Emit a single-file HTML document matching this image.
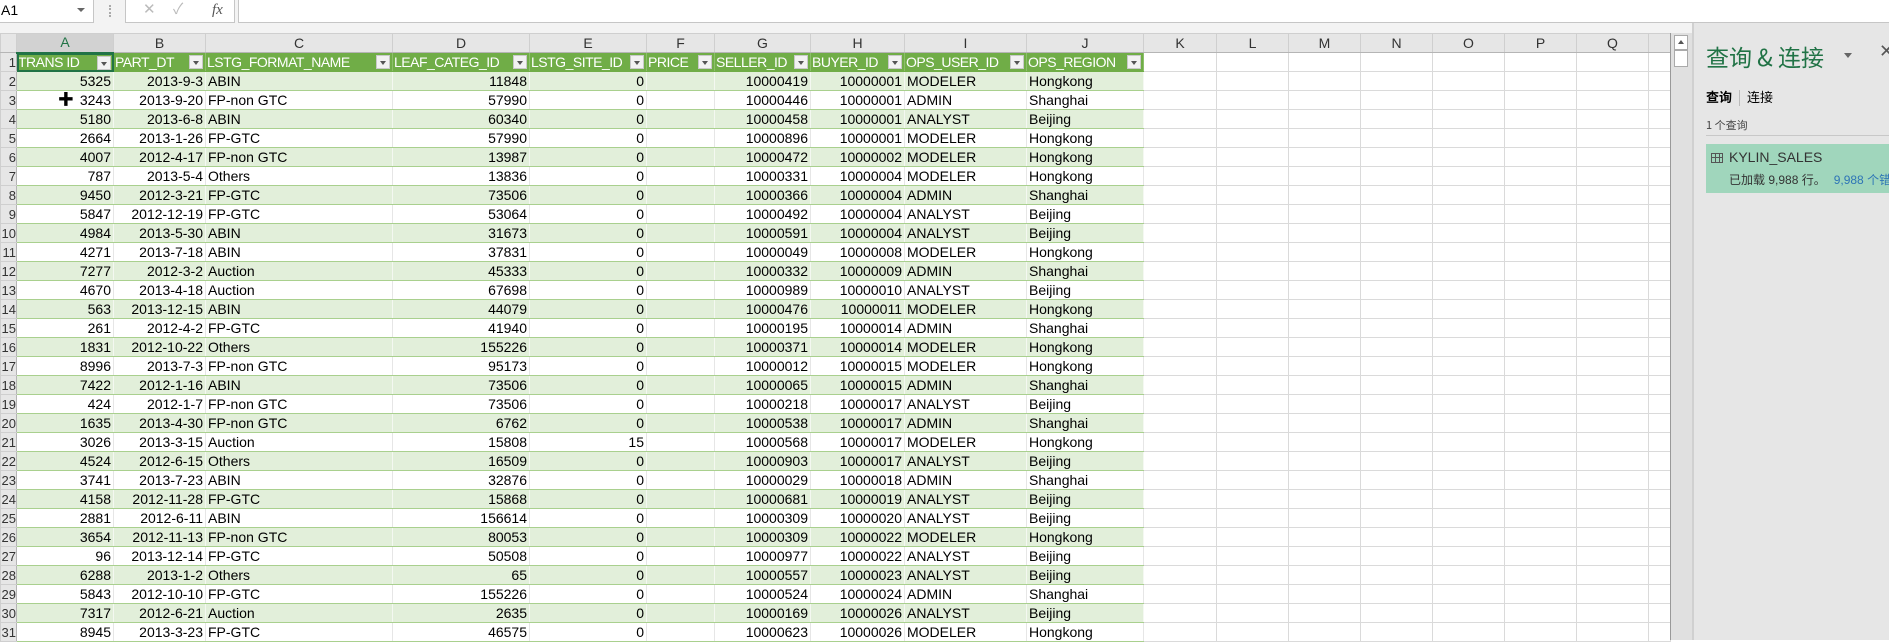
<!DOCTYPE html>
<html><head><meta charset="utf-8">
<style>
*{margin:0;padding:0;box-sizing:border-box}
body{width:1889px;height:640px;overflow:hidden;background:#fff;font-family:"Liberation Sans","Noto Sans CJK SC",sans-serif;font-size:14px;color:#000;position:relative}
.top{position:absolute;left:0;top:0;width:1889px;height:33px;background:#f3f3f3}
.nb{position:absolute;left:0;top:0;width:94px;height:23px;background:#fff;border:1px solid #c6c6c6;border-left:none;border-top:none;font-size:14px;line-height:21px;padding-left:1px}
.nb .ar{position:absolute;right:8px;top:8px;width:0;height:0;border-left:4px solid transparent;border-right:4px solid transparent;border-top:4px solid #666}
.dots{position:absolute;left:109px;top:5px;width:2px;height:12px;border-left:2px dotted #aaa}
.fx{position:absolute;left:125px;top:0;width:110px;height:23px;background:#fff;border:1px solid #c6c6c6;border-top:none;color:#bbb;font-size:15px;line-height:20px}
.fin{position:absolute;left:238px;top:0;width:1651px;height:23px;background:#fff;border:1px solid #c6c6c6;border-top:none;border-right:none}
table{position:absolute;left:0;top:33px;border-collapse:collapse;table-layout:fixed}
td{height:19px;padding:0 2px;border:1px solid #dadada;white-space:nowrap;overflow:hidden;line-height:17px;font-size:14px}
tr.ch td{background:#e6e6e6;text-align:center;color:#333;border-color:#cfcfcf;border-bottom:1px solid #b5b5b5}
td.rh{background:#e6e6e6;color:#333;text-align:right;padding:0;border-color:#cfcfcf;border-right:1px solid #b5b5b5;font-size:13px;direction:rtl}
tr.h td.t{background:#70ad47;color:#fff;position:relative;padding-right:16px;padding-left:1px;border-color:#70ad47;border-right-color:#8cc06a;letter-spacing:-0.5px}
tr.h td.t i{position:absolute;right:2px;top:2px;width:14px;height:14px;background:#f2f2f2;border:1px solid #c9c9c9}
tr.h td.t i:after{content:"";position:absolute;left:3px;top:5px;border-left:3.5px solid transparent;border-right:3.5px solid transparent;border-top:4px solid #555}
tr.g td.t{background:#e2efda}
tr td.t{border-color:#a9d08e;border-left-color:#fff;border-right-color:#e6e6e6}
tr.g td.t{border-left-color:#f4f8f1;border-right-color:#f4f8f1}
.r{text-align:right}
.sb{position:absolute;left:1670px;top:33px;width:22px;height:607px;background:#e0e0e0;border-left:1px solid #999}
.sb .up{position:absolute;left:3px;top:2px;width:14px;height:15px;background:#fff;border:1px solid #aaa}
.sb .up:after{content:"";position:absolute;left:3px;top:4px;border-left:3.5px solid transparent;border-right:3.5px solid transparent;border-bottom:4px solid #555}
.sb .th{position:absolute;left:3px;top:17px;width:14px;height:17px;background:#fff;border:1px solid #aaa}
.pn{position:absolute;left:1692px;top:23px;width:197px;height:617px;background:#e6e6e6;border-left:2px solid #d0d0d0}
.ttl{position:absolute;left:12px;top:16px;font-size:23px;color:#217346;white-space:nowrap;font-family:"Noto Sans CJK SC","Liberation Sans",sans-serif}
.pdd{position:absolute;left:150px;top:30px;border-left:4px solid transparent;border-right:4px solid transparent;border-top:5px solid #666}
.px{position:absolute;left:185px;top:18px;font-size:18px;color:#555}
.tabs{position:absolute;left:12px;top:64px;font-size:13px;white-space:nowrap;font-family:"Noto Sans CJK SC",sans-serif}
.tabs b{font-weight:bold}
.tabs span{display:inline-block;border-left:1px solid #bbb;height:16px;vertical-align:middle;margin:0 7px}
.cnt{position:absolute;left:12px;top:94px;font-size:11px;color:#444;white-space:nowrap;font-family:"Noto Sans CJK SC",sans-serif}
.ln{position:absolute;left:12px;top:112px;width:185px;height:1px;background:#c8c8c8}
.it{position:absolute;left:12px;top:121px;width:185px;height:49px;background:#a0d6bc}
.it .ic{position:absolute;left:5px;top:9px;width:12px;height:10px;border:1px solid #555;background:linear-gradient(#555,#555) 0 3px/100% 1px no-repeat,linear-gradient(90deg,transparent 3px,#555 3px,#555 4px,transparent 4px,transparent 7px,#555 7px,#555 8px,transparent 8px)}
.it .n{position:absolute;left:23px;top:5px;font-size:14px;color:#333;white-space:nowrap}
.it .s{position:absolute;left:23px;top:27px;font-size:12px;color:#333;white-space:nowrap;font-family:"Liberation Sans","Noto Sans CJK SC",sans-serif}
.it .s em{font-style:normal;color:#2e75b6;margin-left:8px}
</style></head><body>
<div class="top">
<div class="nb">A1<span class="ar"></span></div>
<div class="dots"></div>
<div class="fx"><span style="position:absolute;left:17px">✕</span><span style="position:absolute;left:47px">✓</span><span style="position:absolute;left:86px;color:#555;font-style:italic;font-family:'Liberation Serif',serif">fx</span></div>
<div class="fin"></div>
</div>
<table>
<colgroup><col style="width:16px"><col style="width:97px"><col style="width:92px"><col style="width:187px"><col style="width:137px"><col style="width:117px"><col style="width:68px"><col style="width:96px"><col style="width:94px"><col style="width:122px"><col style="width:117px"><col style="width:73px"><col style="width:72px"><col style="width:72px"><col style="width:72px"><col style="width:72px"><col style="width:72px"><col style="width:72px"><col style="width:22px"></colgroup>
<tr class="ch"><td style="background:#e6e6e6"></td><td style="background:#d2d2d2;color:#217346;border-bottom:2px solid #217346">A</td><td>B</td><td>C</td><td>D</td><td>E</td><td>F</td><td>G</td><td>H</td><td>I</td><td>J</td><td>K</td><td>L</td><td>M</td><td>N</td><td>O</td><td>P</td><td>Q</td><td></td></tr>
<tr class="h"><td class="rh">1</td><td class="t" style="outline:2px solid #217346;outline-offset:-2px">TRANS ID<i></i></td><td class="t">PART_DT<i></i></td><td class="t">LSTG_FORMAT_NAME<i></i></td><td class="t">LEAF_CATEG_ID<i></i></td><td class="t">LSTG_SITE_ID<i></i></td><td class="t">PRICE<i></i></td><td class="t">SELLER_ID<i></i></td><td class="t">BUYER_ID<i></i></td><td class="t">OPS_USER_ID<i></i></td><td class="t">OPS_REGION<i></i></td><td></td><td></td><td></td><td></td><td></td><td></td><td></td><td></td></tr>
<tr class="g"><td class="rh">2</td><td class="t r">5325</td><td class="t r">2013-9-3</td><td class="t">ABIN</td><td class="t r">11848</td><td class="t r">0</td><td class="t"></td><td class="t r">10000419</td><td class="t r">10000001</td><td class="t">MODELER</td><td class="t">Hongkong</td><td></td><td></td><td></td><td></td><td></td><td></td><td></td><td></td></tr>
<tr><td class="rh">3</td><td class="t r"><b style="font-size:16px;margin-right:6px">✚</b>3243</td><td class="t r">2013-9-20</td><td class="t">FP-non GTC</td><td class="t r">57990</td><td class="t r">0</td><td class="t"></td><td class="t r">10000446</td><td class="t r">10000001</td><td class="t">ADMIN</td><td class="t">Shanghai</td><td></td><td></td><td></td><td></td><td></td><td></td><td></td><td></td></tr>
<tr class="g"><td class="rh">4</td><td class="t r">5180</td><td class="t r">2013-6-8</td><td class="t">ABIN</td><td class="t r">60340</td><td class="t r">0</td><td class="t"></td><td class="t r">10000458</td><td class="t r">10000001</td><td class="t">ANALYST</td><td class="t">Beijing</td><td></td><td></td><td></td><td></td><td></td><td></td><td></td><td></td></tr>
<tr><td class="rh">5</td><td class="t r">2664</td><td class="t r">2013-1-26</td><td class="t">FP-GTC</td><td class="t r">57990</td><td class="t r">0</td><td class="t"></td><td class="t r">10000896</td><td class="t r">10000001</td><td class="t">MODELER</td><td class="t">Hongkong</td><td></td><td></td><td></td><td></td><td></td><td></td><td></td><td></td></tr>
<tr class="g"><td class="rh">6</td><td class="t r">4007</td><td class="t r">2012-4-17</td><td class="t">FP-non GTC</td><td class="t r">13987</td><td class="t r">0</td><td class="t"></td><td class="t r">10000472</td><td class="t r">10000002</td><td class="t">MODELER</td><td class="t">Hongkong</td><td></td><td></td><td></td><td></td><td></td><td></td><td></td><td></td></tr>
<tr><td class="rh">7</td><td class="t r">787</td><td class="t r">2013-5-4</td><td class="t">Others</td><td class="t r">13836</td><td class="t r">0</td><td class="t"></td><td class="t r">10000331</td><td class="t r">10000004</td><td class="t">MODELER</td><td class="t">Hongkong</td><td></td><td></td><td></td><td></td><td></td><td></td><td></td><td></td></tr>
<tr class="g"><td class="rh">8</td><td class="t r">9450</td><td class="t r">2012-3-21</td><td class="t">FP-GTC</td><td class="t r">73506</td><td class="t r">0</td><td class="t"></td><td class="t r">10000366</td><td class="t r">10000004</td><td class="t">ADMIN</td><td class="t">Shanghai</td><td></td><td></td><td></td><td></td><td></td><td></td><td></td><td></td></tr>
<tr><td class="rh">9</td><td class="t r">5847</td><td class="t r">2012-12-19</td><td class="t">FP-GTC</td><td class="t r">53064</td><td class="t r">0</td><td class="t"></td><td class="t r">10000492</td><td class="t r">10000004</td><td class="t">ANALYST</td><td class="t">Beijing</td><td></td><td></td><td></td><td></td><td></td><td></td><td></td><td></td></tr>
<tr class="g"><td class="rh">10</td><td class="t r">4984</td><td class="t r">2013-5-30</td><td class="t">ABIN</td><td class="t r">31673</td><td class="t r">0</td><td class="t"></td><td class="t r">10000591</td><td class="t r">10000004</td><td class="t">ANALYST</td><td class="t">Beijing</td><td></td><td></td><td></td><td></td><td></td><td></td><td></td><td></td></tr>
<tr><td class="rh">11</td><td class="t r">4271</td><td class="t r">2013-7-18</td><td class="t">ABIN</td><td class="t r">37831</td><td class="t r">0</td><td class="t"></td><td class="t r">10000049</td><td class="t r">10000008</td><td class="t">MODELER</td><td class="t">Hongkong</td><td></td><td></td><td></td><td></td><td></td><td></td><td></td><td></td></tr>
<tr class="g"><td class="rh">12</td><td class="t r">7277</td><td class="t r">2012-3-2</td><td class="t">Auction</td><td class="t r">45333</td><td class="t r">0</td><td class="t"></td><td class="t r">10000332</td><td class="t r">10000009</td><td class="t">ADMIN</td><td class="t">Shanghai</td><td></td><td></td><td></td><td></td><td></td><td></td><td></td><td></td></tr>
<tr><td class="rh">13</td><td class="t r">4670</td><td class="t r">2013-4-18</td><td class="t">Auction</td><td class="t r">67698</td><td class="t r">0</td><td class="t"></td><td class="t r">10000989</td><td class="t r">10000010</td><td class="t">ANALYST</td><td class="t">Beijing</td><td></td><td></td><td></td><td></td><td></td><td></td><td></td><td></td></tr>
<tr class="g"><td class="rh">14</td><td class="t r">563</td><td class="t r">2013-12-15</td><td class="t">ABIN</td><td class="t r">44079</td><td class="t r">0</td><td class="t"></td><td class="t r">10000476</td><td class="t r">10000011</td><td class="t">MODELER</td><td class="t">Hongkong</td><td></td><td></td><td></td><td></td><td></td><td></td><td></td><td></td></tr>
<tr><td class="rh">15</td><td class="t r">261</td><td class="t r">2012-4-2</td><td class="t">FP-GTC</td><td class="t r">41940</td><td class="t r">0</td><td class="t"></td><td class="t r">10000195</td><td class="t r">10000014</td><td class="t">ADMIN</td><td class="t">Shanghai</td><td></td><td></td><td></td><td></td><td></td><td></td><td></td><td></td></tr>
<tr class="g"><td class="rh">16</td><td class="t r">1831</td><td class="t r">2012-10-22</td><td class="t">Others</td><td class="t r">155226</td><td class="t r">0</td><td class="t"></td><td class="t r">10000371</td><td class="t r">10000014</td><td class="t">MODELER</td><td class="t">Hongkong</td><td></td><td></td><td></td><td></td><td></td><td></td><td></td><td></td></tr>
<tr><td class="rh">17</td><td class="t r">8996</td><td class="t r">2013-7-3</td><td class="t">FP-non GTC</td><td class="t r">95173</td><td class="t r">0</td><td class="t"></td><td class="t r">10000012</td><td class="t r">10000015</td><td class="t">MODELER</td><td class="t">Hongkong</td><td></td><td></td><td></td><td></td><td></td><td></td><td></td><td></td></tr>
<tr class="g"><td class="rh">18</td><td class="t r">7422</td><td class="t r">2012-1-16</td><td class="t">ABIN</td><td class="t r">73506</td><td class="t r">0</td><td class="t"></td><td class="t r">10000065</td><td class="t r">10000015</td><td class="t">ADMIN</td><td class="t">Shanghai</td><td></td><td></td><td></td><td></td><td></td><td></td><td></td><td></td></tr>
<tr><td class="rh">19</td><td class="t r">424</td><td class="t r">2012-1-7</td><td class="t">FP-non GTC</td><td class="t r">73506</td><td class="t r">0</td><td class="t"></td><td class="t r">10000218</td><td class="t r">10000017</td><td class="t">ANALYST</td><td class="t">Beijing</td><td></td><td></td><td></td><td></td><td></td><td></td><td></td><td></td></tr>
<tr class="g"><td class="rh">20</td><td class="t r">1635</td><td class="t r">2013-4-30</td><td class="t">FP-non GTC</td><td class="t r">6762</td><td class="t r">0</td><td class="t"></td><td class="t r">10000538</td><td class="t r">10000017</td><td class="t">ADMIN</td><td class="t">Shanghai</td><td></td><td></td><td></td><td></td><td></td><td></td><td></td><td></td></tr>
<tr><td class="rh">21</td><td class="t r">3026</td><td class="t r">2013-3-15</td><td class="t">Auction</td><td class="t r">15808</td><td class="t r">15</td><td class="t"></td><td class="t r">10000568</td><td class="t r">10000017</td><td class="t">MODELER</td><td class="t">Hongkong</td><td></td><td></td><td></td><td></td><td></td><td></td><td></td><td></td></tr>
<tr class="g"><td class="rh">22</td><td class="t r">4524</td><td class="t r">2012-6-15</td><td class="t">Others</td><td class="t r">16509</td><td class="t r">0</td><td class="t"></td><td class="t r">10000903</td><td class="t r">10000017</td><td class="t">ANALYST</td><td class="t">Beijing</td><td></td><td></td><td></td><td></td><td></td><td></td><td></td><td></td></tr>
<tr><td class="rh">23</td><td class="t r">3741</td><td class="t r">2013-7-23</td><td class="t">ABIN</td><td class="t r">32876</td><td class="t r">0</td><td class="t"></td><td class="t r">10000029</td><td class="t r">10000018</td><td class="t">ADMIN</td><td class="t">Shanghai</td><td></td><td></td><td></td><td></td><td></td><td></td><td></td><td></td></tr>
<tr class="g"><td class="rh">24</td><td class="t r">4158</td><td class="t r">2012-11-28</td><td class="t">FP-GTC</td><td class="t r">15868</td><td class="t r">0</td><td class="t"></td><td class="t r">10000681</td><td class="t r">10000019</td><td class="t">ANALYST</td><td class="t">Beijing</td><td></td><td></td><td></td><td></td><td></td><td></td><td></td><td></td></tr>
<tr><td class="rh">25</td><td class="t r">2881</td><td class="t r">2012-6-11</td><td class="t">ABIN</td><td class="t r">156614</td><td class="t r">0</td><td class="t"></td><td class="t r">10000309</td><td class="t r">10000020</td><td class="t">ANALYST</td><td class="t">Beijing</td><td></td><td></td><td></td><td></td><td></td><td></td><td></td><td></td></tr>
<tr class="g"><td class="rh">26</td><td class="t r">3654</td><td class="t r">2012-11-13</td><td class="t">FP-non GTC</td><td class="t r">80053</td><td class="t r">0</td><td class="t"></td><td class="t r">10000309</td><td class="t r">10000022</td><td class="t">MODELER</td><td class="t">Hongkong</td><td></td><td></td><td></td><td></td><td></td><td></td><td></td><td></td></tr>
<tr><td class="rh">27</td><td class="t r">96</td><td class="t r">2013-12-14</td><td class="t">FP-GTC</td><td class="t r">50508</td><td class="t r">0</td><td class="t"></td><td class="t r">10000977</td><td class="t r">10000022</td><td class="t">ANALYST</td><td class="t">Beijing</td><td></td><td></td><td></td><td></td><td></td><td></td><td></td><td></td></tr>
<tr class="g"><td class="rh">28</td><td class="t r">6288</td><td class="t r">2013-1-2</td><td class="t">Others</td><td class="t r">65</td><td class="t r">0</td><td class="t"></td><td class="t r">10000557</td><td class="t r">10000023</td><td class="t">ANALYST</td><td class="t">Beijing</td><td></td><td></td><td></td><td></td><td></td><td></td><td></td><td></td></tr>
<tr><td class="rh">29</td><td class="t r">5843</td><td class="t r">2012-10-10</td><td class="t">FP-GTC</td><td class="t r">155226</td><td class="t r">0</td><td class="t"></td><td class="t r">10000524</td><td class="t r">10000024</td><td class="t">ADMIN</td><td class="t">Shanghai</td><td></td><td></td><td></td><td></td><td></td><td></td><td></td><td></td></tr>
<tr class="g"><td class="rh">30</td><td class="t r">7317</td><td class="t r">2012-6-21</td><td class="t">Auction</td><td class="t r">2635</td><td class="t r">0</td><td class="t"></td><td class="t r">10000169</td><td class="t r">10000026</td><td class="t">ANALYST</td><td class="t">Beijing</td><td></td><td></td><td></td><td></td><td></td><td></td><td></td><td></td></tr>
<tr><td class="rh">31</td><td class="t r">8945</td><td class="t r">2013-3-23</td><td class="t">FP-GTC</td><td class="t r">46575</td><td class="t r">0</td><td class="t"></td><td class="t r">10000623</td><td class="t r">10000026</td><td class="t">MODELER</td><td class="t">Hongkong</td><td></td><td></td><td></td><td></td><td></td><td></td><td></td><td></td></tr>
</table>
<div class="sb"><div class="up"></div><div class="th"></div></div>
<div class="pn">
<div class="ttl">查询 &amp; 连接</div>
<div class="pdd"></div>
<div class="px">✕</div>
<div class="tabs"><b>查询</b><span></span>连接</div>
<div class="cnt">1 个查询</div>
<div class="ln"></div>
<div class="it"><div class="ic"></div><div class="n">KYLIN_SALES</div><div class="s">已加载 9,988 行。<em>9,988 个错误</em></div></div>
</div>
</body></html>
